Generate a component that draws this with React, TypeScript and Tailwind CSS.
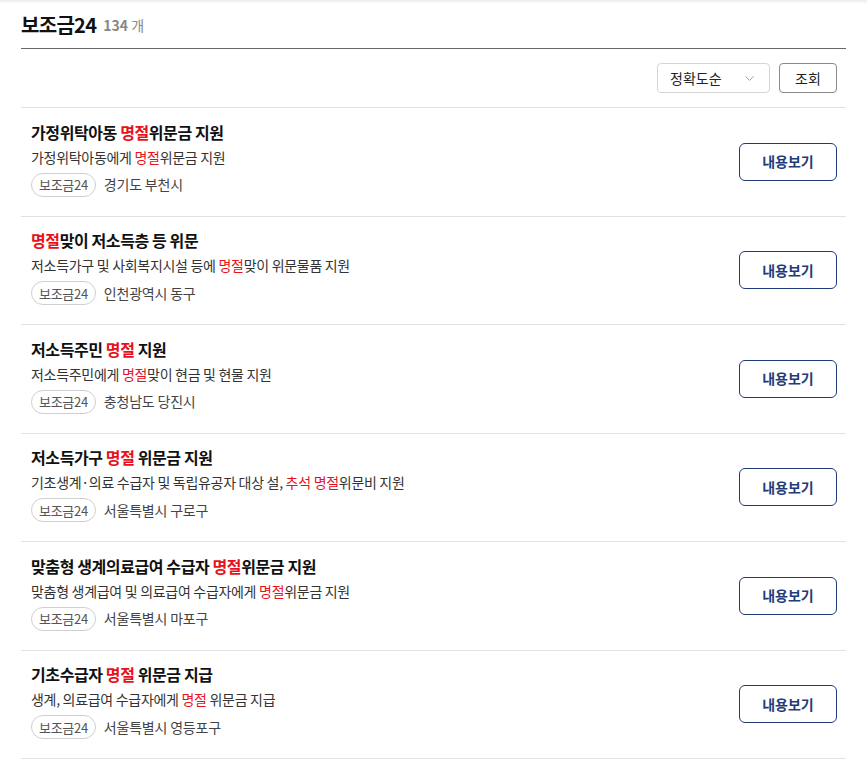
import React from 'react';
import { ChevronDown } from 'lucide-react';

type Part = { t: string; hl?: boolean };

type Item = {
  title: Part[];
  desc: Part[];
  region: string;
};

const items: Item[] = [
  {
    title: [{ t: '가정위탁아동 ' }, { t: '명절', hl: true }, { t: '위문금 지원' }],
    desc: [{ t: '가정위탁아동에게 ' }, { t: '명절', hl: true }, { t: '위문금 지원' }],
    region: '경기도 부천시',
  },
  {
    title: [{ t: '명절', hl: true }, { t: '맞이 저소득층 등 위문' }],
    desc: [{ t: '저소득가구 및 사회복지시설 등에 ' }, { t: '명절', hl: true }, { t: '맞이 위문물품 지원' }],
    region: '인천광역시 동구',
  },
  {
    title: [{ t: '저소득주민 ' }, { t: '명절', hl: true }, { t: ' 지원' }],
    desc: [{ t: '저소득주민에게 ' }, { t: '명절', hl: true }, { t: '맞이 현금 및 현물 지원' }],
    region: '충청남도 당진시',
  },
  {
    title: [{ t: '저소득가구 ' }, { t: '명절', hl: true }, { t: ' 위문금 지원' }],
    desc: [
      { t: '기초생계·의료 수급자 및 독립유공자 대상 설, ' },
      { t: '추석', hl: true },
      { t: ' ' },
      { t: '명절', hl: true },
      { t: '위문비 지원' },
    ],
    region: '서울특별시 구로구',
  },
  {
    title: [{ t: '맞춤형 생계의료급여 수급자 ' }, { t: '명절', hl: true }, { t: '위문금 지원' }],
    desc: [{ t: '맞춤형 생계급여 및 의료급여 수급자에게 ' }, { t: '명절', hl: true }, { t: '위문금 지원' }],
    region: '서울특별시 마포구',
  },
  {
    title: [{ t: '기초수급자 ' }, { t: '명절', hl: true }, { t: ' 위문금 지급' }],
    desc: [{ t: '생계, 의료급여 수급자에게 ' }, { t: '명절', hl: true }, { t: ' 위문금 지급' }],
    region: '서울특별시 영등포구',
  },
];

const Text = ({ parts }: { parts: Part[] }) => (
  <>
    {parts.map((p, i) =>
      p.hl ? (
        <span key={i} className="text-[#e8111b]">
          {p.t}
        </span>
      ) : (
        <React.Fragment key={i}>{p.t}</React.Fragment>
      )
    )}
  </>
);

export default function App() {
  return (
    <div
      className="min-h-screen bg-white"
      style={{ fontFamily: '"Noto Sans CJK KR", "Noto Sans", sans-serif' }}
    >
      <div className="h-[4px] bg-gradient-to-b from-[#ececec] to-white" />
      <div className="ml-[21px] w-[825px]">
        {/* 헤더 */}
        <div className="h-[45px] flex items-center pb-[3px] border-b border-[#666] gap-[7px]">
          <h1 className="text-[20px] font-bold text-[#111] tracking-[-0.7px]">보조금24</h1>
          <span className="text-[14px] text-[#888] pt-[2px]">
            <b className="font-bold">134</b> 개
          </span>
        </div>

        {/* 정렬 */}
        <div className="h-[58px] flex items-center justify-end gap-[9px] pr-[9px]">
          <div className="w-[113px] h-[30px] border border-[#d5d5d5] rounded-[4px] flex items-center justify-between pl-[12px] pr-[12px] text-[14px] text-[#222]">
            <span>정확도순</span>
            <ChevronDown size={15} strokeWidth={1.5} className="text-[#999]" />
          </div>
          <button className="w-[58px] h-[30px] border border-[#888] rounded-[4px] text-[14px] text-[#222]">
            조회
          </button>
        </div>

        {/* 목록 */}
        <ul className="border-t border-[#e2e2e2]">
          {items.map((it, i) => (
            <li
              key={i}
              className="h-[108.5px] border-b border-[#e2e2e2] flex items-center justify-between pl-[10px] pr-[9px]"
            >
              <div className="flex flex-col mb-[6px]">
                <p className="text-[16px] leading-[22px] font-bold text-[#111] tracking-[-0.4px]">
                  <Text parts={it.title} />
                </p>
                <p className="mt-[4px] text-[14px] leading-[20px] text-[#333] tracking-[-0.3px]">
                  <Text parts={it.desc} />
                </p>
                <div className="mt-[6px] flex items-center gap-[8px]">
                  <span className="h-[24px] px-[7px] rounded-full border border-[#cfcfcf] flex items-center text-[13px] text-[#555] tracking-[-0.3px]">
                    보조금24
                  </span>
                  <span className="text-[14px] text-[#444] tracking-[-0.2px]">{it.region}</span>
                </div>
              </div>
              <button className="w-[98px] h-[38px] border border-[#1f3c78] rounded-[6px] text-[14px] font-bold text-[#1f3c78]">
                내용보기
              </button>
            </li>
          ))}
        </ul>
      </div>
    </div>
  );
}
